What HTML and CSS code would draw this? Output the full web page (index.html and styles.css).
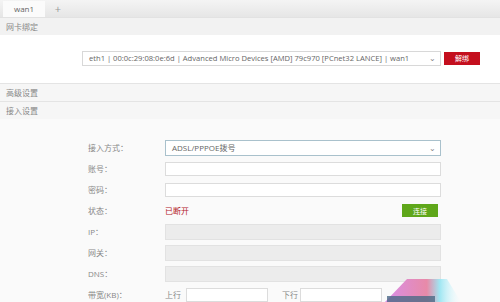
FILE: index.html
```html
<!DOCTYPE html>
<html lang="zh-CN">
<head>
  <meta charset="UTF-8">
  <title>WAN 设置</title>
  <link rel="stylesheet" href="styles.css">
</head>
<body>
  <div class="tabs">
    <div class="tab active">wan1</div>
    <div class="tab add">+</div>
  </div>

  <div class="section-title">网卡绑定</div>
  <div class="bind-row">
    <div class="select wide">
      <span>eth1 | 00:0c:29:08:0e:6d | Advanced Micro Devices [AMD] 79c970 [PCnet32 LANCE] | wan1</span>
      <span class="caret">&#8964;</span>
    </div>
    <button class="btn btn-red">解绑</button>
  </div>

  <div class="section-title bordered">高级设置</div>
  <div class="section-title bordered">接入设置</div>

  <div class="form">
    <div class="row">
      <label>接入方式：</label>
      <div class="select focus"><span>ADSL/PPPOE拨号</span><span class="caret">&#8964;</span></div>
    </div>
    <div class="row">
      <label>账号：</label>
      <div class="input"></div>
    </div>
    <div class="row">
      <label>密码：</label>
      <div class="input"></div>
    </div>
    <div class="row">
      <label>状态：</label>
      <div class="status">
        <span class="off">已断开</span>
        <button class="btn btn-green">连接</button>
      </div>
    </div>
    <div class="row">
      <label>IP：</label>
      <div class="input disabled"></div>
    </div>
    <div class="row">
      <label>网关：</label>
      <div class="input disabled"></div>
    </div>
    <div class="row">
      <label>DNS：</label>
      <div class="input disabled"></div>
    </div>
    <div class="row">
      <label>带宽(KB)：</label>
      <div class="bandwidth">
        <span class="dir">上行</span>
        <div class="input small"></div>
        <span class="dir down">下行</span>
        <div class="input small"></div>
      </div>
    </div>
  </div>

  <!-- watermark logo in the corner -->
  <svg class="logo" width="76" height="24" viewBox="0 0 76 24">
    <defs>
      <linearGradient id="lg" x1="0" y1="0" x2="1" y2="0">
        <stop offset="0" stop-color="#d98ee8"/>
        <stop offset="0.55" stop-color="#e88aa8"/>
        <stop offset="0.72" stop-color="#9fe6f2"/>
        <stop offset="1" stop-color="#e6fbff" stop-opacity="0"/>
      </linearGradient>
    </defs>
    <polygon points="0,24 22,1 62,1 76,24" fill="url(#lg)"/>
    <rect x="2" y="18" width="48" height="6" fill="#4b6a86" opacity="0.8"/>
  </svg>
</body>
</html>
```

FILE: styles.css
```css
/* General Styling */
body {
  margin: 0;
  padding: 0;
  background-color: #fafafa;
  font-family: "Open Sans", "Noto Sans CJK SC", sans-serif;
  font-size: 8px;
  color: #777;
  overflow: hidden;
  position: relative;
  height: 302px;
}

.tabs {
  display: flex;
  align-items: flex-end;
  height: 17px;
  padding-left: 3px;
  background: linear-gradient(#f4f4f4, #e6e6e6);
  border-bottom: 1px solid #e2e2e2;
}

.tab {
  height: 16px;
  line-height: 16px;
  text-align: center;
  color: #666;
}

.tab.active {
  width: 42px;
  background-color: #fbfbfb;
}

.tab.add {
  width: 22px;
  margin-left: 2px;
  font-size: 11px;
  color: #999;
}

.section-title {
  height: 17px;
  line-height: 17px;
  padding-left: 6px;
  background-color: #f2f2f2;
  color: #888;
}

.section-title.bordered {
  border-top: 1px solid #e4e4e4;
  background-color: #f6f6f6;
}

.bind-row {
  display: flex;
  align-items: center;
  height: 46px;
  padding-left: 82px;
  padding-bottom: 2px;
  background-color: #fff;
}

.select {
  display: flex;
  justify-content: space-between;
  align-items: center;
  box-sizing: border-box;
  height: 15px;
  padding: 0 4px 0 6px;
  border: 1px solid #d8d8d8;
  background-color: #fff;
  color: #666;
}

.select.wide {
  width: 359px;
  font-size: 7.6px;
}

.select.focus {
  border-color: #a9c1cc;
  height: 16px;
}

.caret {
  font-size: 8px;
  line-height: 6px;
  color: #888;
}

.btn {
  border: none;
  color: #fff;
  font-family: inherit;
  font-size: 7px;
  padding: 0;
  width: 36px;
  height: 13px;
}

.btn-red {
  margin-left: 3px;
  background-color: #c40f1e;
}

.btn-green {
  background-color: #5fa71a;
  margin-right: 3px;
}

.form {
  padding: 18px 0 0 88px;
}

.row {
  display: flex;
  align-items: center;
  height: 21px;
}

.row label {
  width: 77px;
  color: #888;
}

.row .select,
.row .input {
  width: 276px;
}

.input {
  box-sizing: border-box;
  height: 14px;
  border: 1px solid #dcdcdc;
  background-color: #fff;
}

.input.disabled {
  height: 16px;
  background-color: #ececec;
  border-color: #e2e2e2;
}

.status {
  display: flex;
  justify-content: space-between;
  align-items: center;
  width: 276px;
}

.off {
  color: #b3202a;
}

.bandwidth {
  display: flex;
  align-items: center;
}

.dir {
  width: 21px;
  color: #888;
}

.dir.down {
  margin-left: 14px;
  width: 18px;
}

.row .input.small {
  width: 82px;
}

.logo {
  position: absolute;
  left: 385px;
  bottom: 0;
}
```
